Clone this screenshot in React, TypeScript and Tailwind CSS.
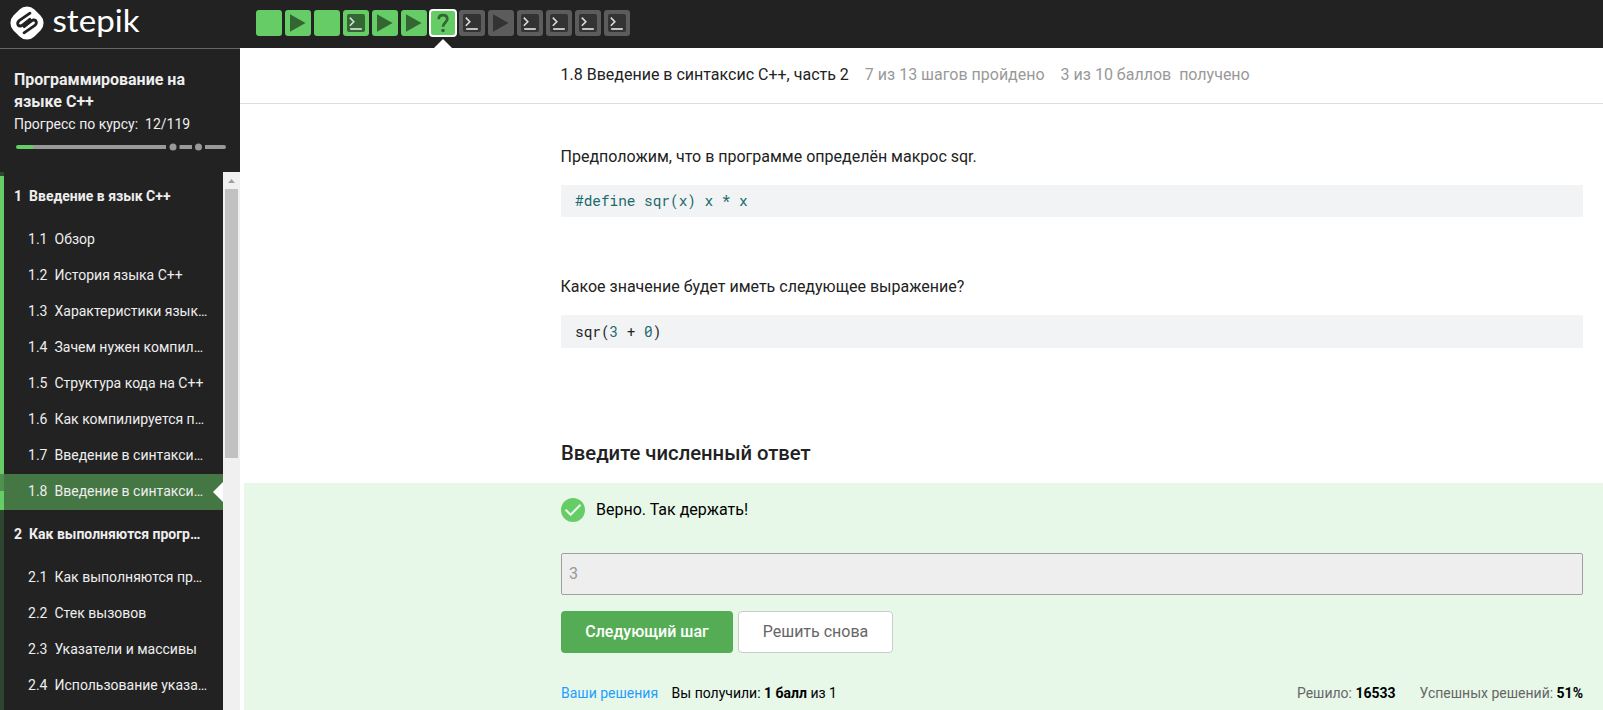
import React from "react";

type StepKind = "text" | "video" | "code" | "quiz";

const steps: { kind: StepKind; done: boolean; active?: boolean }[] = [
  { kind: "text", done: true },
  { kind: "video", done: true },
  { kind: "text", done: true },
  { kind: "code", done: true },
  { kind: "video", done: true },
  { kind: "video", done: true },
  { kind: "quiz", done: true, active: true },
  { kind: "code", done: false },
  { kind: "video", done: false },
  { kind: "code", done: false },
  { kind: "code", done: false },
  { kind: "code", done: false },
  { kind: "code", done: false },
];

const sections = [
  {
    n: "1",
    title: "Введение в язык C++",
    lessons: [
      "Обзор",
      "История языка C++",
      "Характеристики язык…",
      "Зачем нужен компил…",
      "Структура кода на C++",
      "Как компилируется п…",
      "Введение в синтакси…",
      "Введение в синтакси…",
    ],
    active: 7,
  },
  {
    n: "2",
    title: "Как выполняются прогр…",
    lessons: ["Как выполняются пр…", "Стек вызовов", "Указатели и массивы", "Использование указа…"],
    active: -1,
  },
];

function StepIcon({ kind, done }: { kind: StepKind; done: boolean }) {
  const dark = done ? "#336633" : "#333333";
  if (kind === "video") {
    return (
      <svg className="size-[26px]" viewBox="0 0 26 26">
        <path d="M5 4.2v17.6L20.5 13z" fill={dark} />
      </svg>
    );
  }
  if (kind === "code") {
    return (
      <svg className="size-[26px]" viewBox="0 0 26 26">
        <rect x="4" y="4" width="18" height="18" rx="2" fill={dark} />
        <path d="M6.8 7.6l4 4.1-4 4.1" fill="none" stroke="#ddd" strokeWidth="1.6" />
        <path d="M7.2 19h11.6" stroke="#ddd" strokeWidth="1.7" />
      </svg>
    );
  }
  if (kind === "quiz") {
    return (
      <svg className="size-[24px]" viewBox="0 0 24 24">
        <path
          d="M7.7 8.3C7.7 5.5 9.500 4.200 12 4.200s4.300 1.300 4.300 3.900c0 3.300-4.300 3.600-4.300 7.700"
          fill="none"
          stroke={dark}
          strokeWidth="2.700"
        />
        <circle cx="12" cy="19.500" r="1.800" fill={dark} />
      </svg>
    );
  }
  return null;
}

function Logo() {
  return (
    <div className="flex h-12 w-60 shrink-0 items-start">
      <svg className="ml-2.5 mt-1.5 size-[34px] shrink-0" viewBox="0 0 34 34">
        <rect x="2.200" y="2.200" width="29.600" height="29.600" rx="10.500" transform="rotate(45 17 17)" fill="#fff" />
        <g fill="none" stroke="#222" strokeWidth="2.800" strokeLinecap="round" strokeLinejoin="round">
          <path d="M20 7.200L9.500 14.400c-3.200 2.400-1.800 5.900 1 5.600 1.300-.2 2-.9 3-1.700l6.300-5" />
          <path d="M14 26.800L24.500 19.600c3.200-2.400 1.800-5.900-1-5.600-1.300.2-2 .9-3 1.700l-6.300 5" />
        </g>
      </svg>
      <svg className="ml-2 h-12 w-[90px] shrink-0 overflow-visible" viewBox="0 0 90 48">
        <text
          x="0.500"
          y="31.500"
          textLength="87"
          lengthAdjust="spacingAndGlyphs"
          fontSize="31"
          fill="#fff"
          className="font-['Lato',sans-serif]"
        >
          stepik
        </text>
      </svg>
    </div>
  );
}

function StepBar() {
  return (
    <div className="flex gap-[3px] pl-4 pt-2.5">
      {steps.map((s, i) => (
        <div
          key={i}
          className={`relative flex size-[26px] items-center justify-center rounded-[3px] ${
            s.done ? "bg-[#66cc66]" : "bg-[#5c5c5c]"
          } ${s.active ? "outline-2 -outline-offset-1 outline-white" : ""}`}
        >
          <StepIcon kind={s.kind} done={s.done} />
          {s.active && (
            <svg className="absolute left-[4px] top-[29px] h-[9px] w-[18px]" viewBox="0 0 18 9">
              <path d="M0 9L9 0l9 9z" fill="#fff" />
            </svg>
          )}
        </div>
      ))}
    </div>
  );
}

function Sidebar() {
  return (
    <aside className="flex w-60 shrink-0 flex-col bg-[#222] text-[#eee]">
      <div className="h-[124px] shrink-0 border-t border-[#666] pl-3.5 pt-5">
        <h1 className="text-base leading-[22px] font-bold">
          Программирование на
          <br />
          языке C++
        </h1>
        <p className="text-sm leading-[23px] whitespace-pre">Прогресс по курсу:{"  "}12/119</p>
        <svg className="ml-0.5 mt-[7px] block h-2 w-[210px]" viewBox="0 0 210 8">
          <path d="M2 4H150" stroke="#999" strokeWidth="4" strokeLinecap="butt" />
          <path d="M2 4H15.500" stroke="#66cc66" strokeWidth="4" strokeLinecap="round" />
          <circle cx="157" cy="4" r="3.500" fill="#999" />
          <path d="M163.500 4H176" stroke="#999" strokeWidth="4" />
          <circle cx="182.500" cy="4" r="3.500" fill="#999" />
          <path d="M189 4H206" stroke="#999" strokeWidth="4" />
          <path d="M205 4H208" stroke="#999" strokeWidth="4" strokeLinecap="round" />
        </svg>
      </div>
      <div className="flex min-h-0 flex-1">
        <div className="flex w-1 flex-col bg-[#2e452f]">
          <div className="mt-1 h-[298px] bg-[#66cc66]" />
          <div className="h-[17px] bg-[#4f8f4f]" />
          <div className="h-[19px] bg-[#66cc66]" />
        </div>
        <nav className="w-[219px] overflow-hidden text-sm">
          {sections.map((sec) => (
            <div key={sec.n}>
              <div className="flex h-[50px] items-center gap-[7px] pb-0.5 pl-2.5 font-bold whitespace-nowrap">
                <span>{sec.n}</span>
                <span>{sec.title}</span>
              </div>
              {sec.lessons.map((l, i) => (
                <div
                  key={i}
                  className={`relative flex h-9 items-center pb-0.5 pl-6 whitespace-nowrap ${
                    i === sec.active ? "bg-[#447744]" : ""
                  }`}
                >
                  <span className="w-[26.500px] shrink-0">
                    {sec.n}.{i + 1}
                  </span>
                  <span>{l}</span>
                  {i === sec.active && (
                    <svg className="absolute right-0 top-2 h-5 w-2.5" viewBox="0 0 10 20">
                      <path d="M10 0v20L0 10z" fill="#fff" />
                    </svg>
                  )}
                </div>
              ))}
            </div>
          ))}
        </nav>
        <div className="flex w-[17px] flex-col items-center bg-[#f0f0f0]">
          <svg className="h-[17px] w-[17px] shrink-0" viewBox="0 0 17 17">
            <path d="M5 11l3.500-4 3.500 4z" fill="#a0a0a0" />
          </svg>
          <div className="h-[269px] w-[13px] bg-[#c1c1c1]" />
        </div>
      </div>
    </aside>
  );
}

function Answer() {
  return (
    <section className="ml-1 h-[227px] bg-[#e7f8e9] pl-[317px] pr-5 pt-[15px] text-black">
      <div className="flex h-6 items-center gap-3">
        <svg className="size-6" viewBox="0 0 24 24">
          <circle cx="12" cy="12" r="12" fill="#66cc66" />
          <path d="M4.600 11.700l5 5L19.500 6.800" fill="none" stroke="#e7f8e9" strokeWidth="2.200" />
        </svg>
        <span className="-ml-px">Верно. Так держать!</span>
      </div>
      <div className="mt-[31px] flex h-[42px] items-center rounded-xs border border-[#a0a0a0] bg-[#eee] pl-[7px] text-[#999]">
        3
      </div>
      <div className="mt-4 flex h-[42px] gap-[5px]">
        <button className="w-[172px] rounded bg-[#54ad54] font-medium text-white">Следующий шаг</button>
        <button className="w-[155px] rounded border border-[#ccc] bg-white text-[#666]">Решить снова</button>
      </div>
      <div className="mt-[30px] flex h-5 items-center text-sm">
        <a className="text-[#1e9eff]">Ваши решения</a>
        <span className="ml-[13.500px]">
          Вы получили: <b>1 балл</b> из 1
        </span>
        <span className="ml-auto text-[#666]">
          Решило: <b className="text-black">16533</b>
        </span>
        <span className="ml-6 text-[#666]">
          Успешных решений: <b className="text-black">51%</b>
        </span>
      </div>
    </section>
  );
}

const codeClass =
  "mr-5 flex items-center bg-[#f2f3f5] pl-3.5 font-['Roboto_Mono','DejaVu_Sans_Mono',monospace] text-[14.400px]";

export default function App() {
  return (
    <div className="flex h-[710px] w-[1603px] flex-col overflow-hidden bg-white font-['Roboto',sans-serif] text-base text-[#222]">
      <header className="flex h-12 shrink-0 bg-[#222]">
        <Logo />
        <StepBar />
      </header>
      <div className="flex min-h-0 flex-1">
        <Sidebar />
        <main className="flex flex-1 flex-col">
          <div className="flex h-14 shrink-0 items-center gap-4 border-b border-[#ddd] pb-0.5 pl-[320.500px] whitespace-pre">
            <span>1.8 Введение в синтаксис C++, часть 2</span>
            <span className="text-[#999]">7 из 13 шагов пройдено</span>
            <span className="text-[#999]">3 из 10 баллов{"  "}получено</span>
          </div>
          <div className="h-[379px] shrink-0 pl-[321px]">
            <p className="-ml-[0.5px] pt-[41px] leading-6">Предположим, что в программе определён макрос sqr.</p>
            <pre className={`${codeClass} mt-4 h-8 text-[#1a6b6b]`}>#define sqr(x) x * x</pre>
            <p className="-ml-[0.5px] pt-[58px] leading-6">Какое значение будет иметь следующее выражение?</p>
            <pre className={`${codeClass} mt-4 h-[33px] text-[#222]`}>
              sqr(<span className="text-[#1a6b6b]">3</span> + <span className="text-[#1a6b6b]">0</span>)
            </pre>
            <h2 className="pt-[91px] text-[20.250px] leading-7 font-medium">Введите численный ответ</h2>
          </div>
          <Answer />
        </main>
      </div>
    </div>
  );
}
